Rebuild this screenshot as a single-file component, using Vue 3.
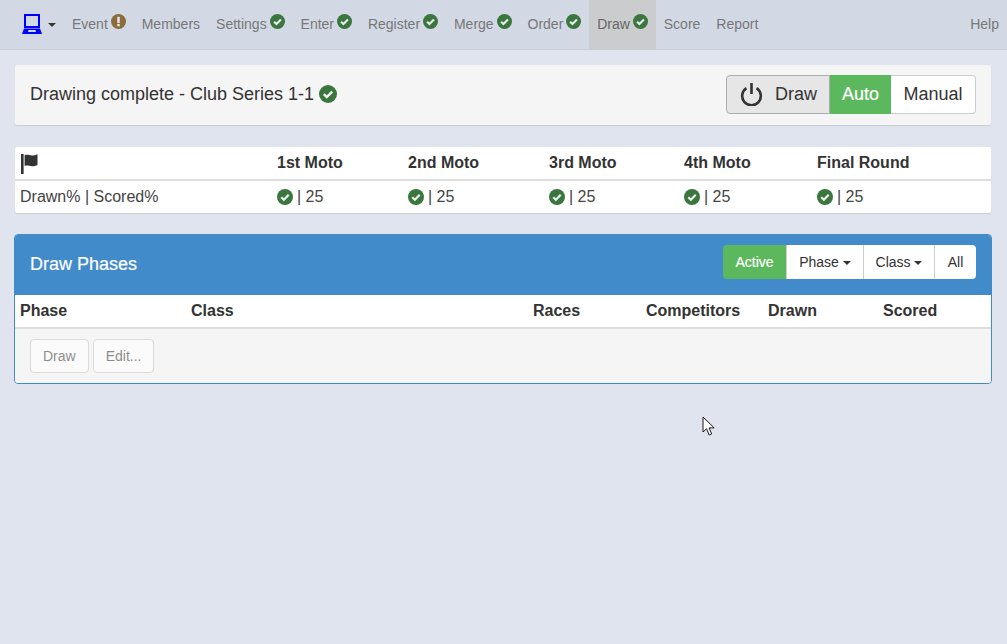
<script setup>
// Navbar entries, status is shown as a small icon next to the label
const navItems = [
  { label: 'Event', status: 'warn' },
  { label: 'Members' },
  { label: 'Settings', status: 'ok' },
  { label: 'Enter', status: 'ok' },
  { label: 'Register', status: 'ok' },
  { label: 'Merge', status: 'ok' },
  { label: 'Order', status: 'ok' },
  { label: 'Draw', status: 'ok', active: true },
  { label: 'Score' },
  { label: 'Report' }
];

const motos = ['1st Moto', '2nd Moto', '3rd Moto', '4th Moto', 'Final Round'];

const phaseColumns = ['Phase', 'Class', 'Races', 'Competitors', 'Drawn', 'Scored'];
</script>

<template>
  <div class="page">
    <nav class="navbar">
      <a class="brand">
        <svg class="laptop" width="22" height="20" viewBox="0 0 22 20">
          <path fill="#0000ff" fill-rule="evenodd" d="M3 0h16v14H3zM5 2v10h12V2zM3 14.500h16L21 20H1zM7.500 16l-.5 2h8l-.5-2z" />
        </svg>
        <span class="caret brand-caret"></span>
      </a>
      <a
        v-for="item in navItems"
        :key="item.label"
        class="nav-item"
        :class="{ active: item.active }"
      >
        {{ item.label }}
        <svg v-if="item.status === 'ok'" class="nav-status" width="15" height="15" viewBox="0 0 16 16">
          <circle cx="8" cy="8" r="8" fill="#3a763d" />
          <path d="M4.300 8.200l2.600 2.500 4.800-4.900" fill="none" stroke="#e6ecf0" stroke-width="2.200" />
        </svg>
        <svg v-if="item.status === 'warn'" class="nav-status" width="15" height="15" viewBox="0 0 16 16">
          <circle cx="8" cy="8" r="8" fill="#8a6d3b" />
          <rect x="6.700" y="3" width="2.600" height="6.500" fill="#e6ecf0" />
          <rect x="6.700" y="10.600" width="2.600" height="2.500" fill="#e6ecf0" />
        </svg>
      </a>
      <a class="nav-item help">Help</a>
    </nav>

    <main class="content">
      <section class="status-well">
        <div class="status-text">
          Drawing complete - Club Series 1-1
          <svg width="18" height="18" viewBox="0 0 16 16">
            <circle cx="8" cy="8" r="8" fill="#3a763d" />
            <path d="M4.300 8.200l2.600 2.500 4.800-4.900" fill="none" stroke="#f0f4f0" stroke-width="2.200" />
          </svg>
        </div>
        <div class="mode-group">
          <button class="mode-btn draw-btn">
            <svg width="23" height="24" viewBox="0 0 23 24">
              <path d="M6.400 6.200a9.300 9.300 0 1 0 10.200 0" fill="none" stroke="#333" stroke-width="2.600" />
              <rect x="10.200" y="1" width="2.600" height="11" fill="#333" />
            </svg>
            Draw
          </button>
          <button class="mode-btn auto-btn">Auto</button>
          <button class="mode-btn manual-btn">Manual</button>
        </div>
      </section>

      <section class="moto-table">
        <div class="moto-row moto-head">
          <div class="moto-cell">
            <svg class="flag" width="19" height="20" viewBox="0 0 19 20">
              <rect x="0" y="0" width="2.600" height="20" fill="#333" />
              <path d="M3.600 1.200c3-1 4.500.3 7.500.3 2 0 3.500-.4 5.400-1.300v10.700c-1.900.9-3.400 1.300-5.400 1.300-3 0-4.500-1.300-7.500-.3z" fill="#333" />
            </svg>
          </div>
          <div v-for="moto in motos" :key="moto" class="moto-cell">{{ moto }}</div>
        </div>
        <div class="moto-row moto-body">
          <div class="moto-cell">Drawn% | Scored%</div>
          <div v-for="moto in motos" :key="moto" class="moto-cell score-cell">
            <svg width="16" height="16" viewBox="0 0 16 16">
              <circle cx="8" cy="8" r="8" fill="#3a763d" />
              <path d="M4.300 8.200l2.600 2.500 4.800-4.900" fill="none" stroke="#f0f4f0" stroke-width="2.200" />
            </svg>
            | 25
          </div>
        </div>
      </section>

      <section class="phases-panel">
        <header class="panel-heading">
          <h3>Draw Phases</h3>
          <div class="filter-group">
            <button class="filter-btn filter-active">Active</button>
            <button class="filter-btn filter-phase">Phase <span class="caret"></span></button>
            <button class="filter-btn filter-class">Class <span class="caret"></span></button>
            <button class="filter-btn filter-all">All</button>
          </div>
        </header>
        <div class="phase-head">
          <div v-for="column in phaseColumns" :key="column" class="phase-cell">{{ column }}</div>
        </div>
        <footer class="panel-footer">
          <button class="footer-btn" disabled>Draw</button>
          <button class="footer-btn" disabled>Edit...</button>
        </footer>
      </section>
    </main>

    <!-- mouse pointer captured in the screenshot -->
    <svg class="pointer" width="14" height="21" viewBox="0 0 14 21">
      <path d="M1 1v15l3.600-3.300 2.500 6.300 2.600-1.100-2.600-6h5.100z" fill="#fff" stroke="#1a1a1a" stroke-width="1" />
    </svg>
  </div>
</template>

<style>
html,
body {
  margin: 0;
  background: #e0e4ee;
}
</style>

<style scoped>
.page {
  position: relative;
  min-height: 644px;
  background: #e0e4ee;
  font-family: "Liberation Sans", Arial, sans-serif;
  font-size: 16px;
  color: #333;
  overflow: hidden;
}

/* Navbar */
.navbar {
  display: flex;
  height: 49px;
  padding-left: 15px;
  background: #d2d9e5;
  border-bottom: 1px solid #c8ccd4;
}

.brand {
  display: flex;
  align-items: center;
  width: 49px;
  padding-left: 6px;
  box-sizing: border-box;
}

.laptop {
  margin-top: -2px;
}

.brand-caret {
  margin-left: 5px;
  border-top-color: #0000ff;
}

.nav-item {
  display: flex;
  align-items: center;
  height: 49px;
  padding: 0 8px 2px;
  box-sizing: border-box;
  font-size: 14px;
  color: #777;
  white-space: nowrap;
}

.nav-item.active {
  background: #cbcccd;
  color: #666;
}

.nav-status {
  margin: -5px 0 0 2.900px;
}

.help {
  margin-left: auto;
}

/* Page content */
.content {
  display: flex;
  flex-direction: column;
  padding: 15px 16px 0 15px;
}

.status-well {
  display: flex;
  justify-content: space-between;
  align-items: center;
  height: 60px;
  padding: 0 15px 2px;
  box-sizing: border-box;
  background: #f5f5f5;
  box-shadow: 0 1px 1px rgba(0, 0, 0, 0.1);
  border-radius: 2px;
}

.status-text {
  display: flex;
  align-items: center;
  gap: 5px;
  font-size: 18px;
  color: #333;
}

.mode-group {
  display: flex;
}

.mode-btn {
  height: 39px;
  padding: 0;
  font-family: inherit;
  font-size: 18px;
  color: #333;
  background: #fff;
  border: 1px solid #ccc;
  box-sizing: border-box;
}

.draw-btn {
  display: flex;
  align-items: center;
  gap: 12px;
  width: 104px;
  padding-left: 13px;
  background: #e6e6e6;
  border-color: #adadad;
  border-radius: 4px 0 0 4px;
}

.auto-btn {
  width: 61px;
  background: #5cb85c;
  border-color: #5cb85c;
  color: #fff;
  -webkit-text-stroke: 0.2px #fff;
}

.manual-btn {
  width: 85px;
  border-left: 0;
  border-radius: 0 4px 4px 0;
}

/* Moto summary */
.moto-table {
  margin-top: 22px;
  background: #fff;
  border-radius: 2px;
  box-shadow: 0 1px 1px rgba(0, 0, 0, 0.1);
}

.moto-row {
  display: grid;
  grid-template-columns: 257px 131px 141px 135px 133px 1fr;
  align-items: center;
  height: 32px;
}

.moto-head {
  border-bottom: 2px solid #ddd;
  font-weight: bold;
}

.moto-body {
  color: #444;
}

.moto-cell {
  display: flex;
  align-items: center;
  padding: 0 5px;
  white-space: nowrap;
}

.flag {
  margin: 1px 0 0 1px;
}

.score-cell svg {
  margin-right: 4px;
}

/* Draw phases panel */
.phases-panel {
  margin-top: 21px;
  margin-left: -1px;
  margin-right: -1px;
  background: #fff;
  border: 1px solid #428bca;
  border-radius: 4px;
  overflow: hidden;
}

.panel-heading {
  display: flex;
  justify-content: space-between;
  align-items: center;
  height: 60px;
  padding: 0 15px 2px;
  box-sizing: border-box;
  background: #428bca;
}

.panel-heading h3 {
  margin: 0;
  font-size: 18px;
  font-weight: normal;
  color: #fff;
  -webkit-text-stroke: 0.2px #fff;
}

.filter-group {
  display: flex;
  margin-top: -4px;
}

.filter-btn {
  height: 34px;
  padding: 0;
  font-family: inherit;
  font-size: 14px;
  color: #333;
  background: #fff;
  border: 0;
  border-left: 1px solid #ccc;
}

.filter-btn:first-child {
  border-left: 0;
  border-radius: 4px 0 0 4px;
}

.filter-btn:last-child {
  border-radius: 0 4px 4px 0;
}

.filter-active {
  width: 63px;
  background: #5cb85c;
  color: #fff;
  font-weight: normal;
  -webkit-text-stroke: 0.2px #fff;
}

.filter-phase {
  width: 77px;
}

.filter-class {
  width: 71px;
}

.filter-all {
  width: 42px;
}

.caret {
  display: inline-block;
  width: 0;
  height: 0;
  vertical-align: middle;
  border-top: 4px solid;
  border-right: 4px solid transparent;
  border-left: 4px solid transparent;
}

.phase-head {
  display: grid;
  grid-template-columns: 171px 342px 113px 122px 115px 1fr;
  align-items: center;
  height: 32px;
  border-bottom: 2px solid #ddd;
  font-weight: bold;
}

.phase-cell {
  padding: 0 5px;
}

.panel-footer {
  display: flex;
  gap: 4px;
  height: 54px;
  padding: 10px 15px;
  box-sizing: border-box;
  background: #f5f5f5;
}

.footer-btn {
  height: 34px;
  padding: 0 12px;
  font-family: inherit;
  font-size: 14px;
  color: #555;
  background: #fff;
  border: 1px solid #ccc;
  border-radius: 4px;
  opacity: 0.65;
}

/* Pointer sits over the page */
.pointer {
  position: absolute;
  left: 702px;
  top: 416px;
}
</style>
